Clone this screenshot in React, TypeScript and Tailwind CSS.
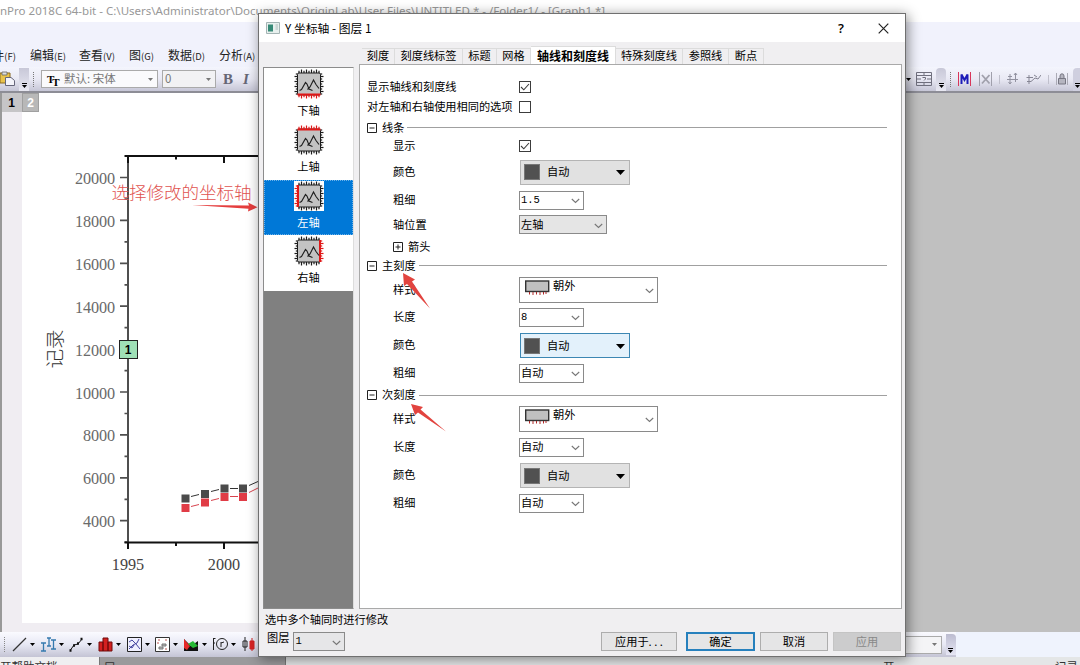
import React from "react";

const MENUS = [
    { label: "编辑", key: "(E)", width: "w-[49px]" },
    { label: "查看", key: "(V)", width: "w-[50px]" },
    { label: "图", key: "(G)", width: "w-[39px]" },
    { label: "数据", key: "(D)", width: "w-[51px]" },
    { label: "分析", key: "(A)", width: "w-[50px]" },
];

const TABS = [
    { label: "刻度", width: "w-[33px]" },
    { label: "刻度线标签", width: "w-[68px]" },
    { label: "标题", width: "w-[34px]" },
    { label: "网格", width: "w-[34px]" },
    { label: "轴线和刻度线", width: "w-[85px]", active: true },
    { label: "特殊刻度线", width: "w-[67px]" },
    { label: "参照线", width: "w-[46px]" },
    { label: "断点", width: "w-[35px]" },
];

type Side = "bottom" | "top" | "left" | "right";

const AXES: { side: Side; label: string }[] = [
    { side: "bottom", label: "下轴" },
    { side: "top", label: "上轴" },
    { side: "left", label: "左轴" },
    { side: "right", label: "右轴" },
];

const Y_TICKS = [20000, 18000, 16000, 14000, 12000, 10000, 8000, 6000, 4000];

const AxisIcon = ({ side }: { side: Side }) => {
    const color = (s: Side) => (s === side ? "#e01818" : "#1c1c1c");
    const ticks = [5, 7.5, 10, 12.5, 15, 17.5, 20, 22.5, 25];
    return (
        <svg width="30" height="30" viewBox="0 0 30 30" className="shrink-0 bg-white">
            <rect x="3.5" y="4" width="23" height="22" rx="1.5" fill="#c3c3c3" stroke="#1c1c1c" />
            {ticks.map((t, i) => {
                const o = i % 2 ? 0 : 1.3;
                return (
                    <g key={t} strokeWidth="1.2">
                        <path d={`M${t} ${0.5 + o}V4`} stroke={color("top")} />
                        <path d={`M${t} 26V${29.5 - o}`} stroke={color("bottom")} />
                        <path d={`M${0.5 + o} ${t}H3.5`} stroke={color("left")} />
                        <path d={`M26.5 ${t}H${29.5 - o}`} stroke={color("right")} />
                    </g>
                );
            })}
            {side === "top" && <path d="M3.5 4.5H26.5" stroke="#e01818" strokeWidth="2" />}
            {side === "bottom" && <path d="M3.5 25.5H26.5" stroke="#e01818" strokeWidth="2" />}
            {side === "left" && <path d="M4 4V26" stroke="#e01818" strokeWidth="2" />}
            {side === "right" && <path d="M26 4V26" stroke="#e01818" strokeWidth="2" />}
            <path
                d="M5.500 21.500L7.500 20.500L11.500 13.500L13 15L15 20L18.500 21.500M13.500 20.500L16 18L19.500 11L22 15.500L25 19.500"
                fill="none"
                stroke="#1c1c1c"
                strokeWidth="1.1"
            />
        </svg>
    );
};

const Chevron = () => (
    <svg width="9" height="6" viewBox="0 0 9 6" className="mt-[2px] shrink-0">
        <path d="M0.8 1L4.5 4.5L8.2 1" fill="none" stroke="#777" strokeWidth="1.1" />
    </svg>
);

const Down = ({ className = "text-black" }: { className?: string }) => (
    <svg width="5" height="3" viewBox="0 0 5 3" className={`shrink-0 ${className}`}>
        <path d="M0 0H5L2.5 3Z" fill="currentColor" />
    </svg>
);

const Check = ({ checked }: { checked?: boolean }) => (
    <div className="flex h-3 w-3 items-center justify-center border border-[#3c3c3c] bg-white">
        {checked && (
            <svg width="10" height="10" viewBox="0 0 10 10">
                <path d="M1 5L3.8 7.8L9 2" fill="none" stroke="#3c3c3c" strokeWidth="1.1" />
            </svg>
        )}
    </div>
);

const Combo = ({ value, className = "w-[65px] bg-white" }: { value: string; className?: string }) => (
    <div className={`flex h-[19px] items-center justify-between border border-[#8a8a8a] pl-[1px] pr-[3px] ${className}`}>
        <span className={/\d/.test(value) ? "font-['Liberation_Mono'] text-[10.5px]" : ""}>{value}</span>
        <Chevron />
    </div>
);

const ColorButton = ({ hot }: { hot?: boolean }) => (
    <div
        className={`ml-px mt-px flex h-[25px] w-[110px] items-center border px-[3px] ${
            hot ? "border-[#3c87b3] bg-[#e3f1fb]" : "border-[#b4b4b4] bg-[#e1e1e1]"
        }`}
    >
        <div className="h-4 w-4 border border-[#777] bg-[#515151]" />
        <span className="ml-[7px] flex-1">自动</span>
        <svg width="9" height="5" viewBox="0 0 9 5" className="mr-px mt-px">
            <path d="M0 0H9L4.5 5Z" />
        </svg>
    </div>
);

const StyleCombo = () => (
    <div className="flex h-[26px] w-[139px] border border-[#8a8a8a] bg-white pl-[5px] pr-[3px]">
        <svg width="25" height="16" viewBox="0 0 25 16" className="mt-[2px]">
            <rect x="0.7" y="1" width="23" height="10.5" fill="#c0c0c0" stroke="#333" strokeWidth="1.4" />
            <path d="M4.5 12V14.5M8 12V15M11.500 12V14.500M15 12V15M18.500 12V14.500M21 12V14" stroke="#b02828" />
        </svg>
        <span className="ml-[3px] flex-1 leading-[15px]">朝外</span>
        <div className="flex items-center">
            <Chevron />
        </div>
    </div>
);

const Row = ({ label, height, children }: { label: string; height: string; children: React.ReactNode }) => (
    <div className={`flex items-center ${height}`}>
        <span className="w-[126px]">{label}</span>
        {children}
    </div>
);

const Expander = ({ plus }: { plus?: boolean }) => (
    <svg width="10" height="10" viewBox="0 0 10 10" className="shrink-0">
        <path d={plus ? "M0.5 0.5H9.5V9.5H0.5ZM2.5 5H7.5M5 2.5V7.5" : "M0.5 0.5H9.5V9.5H0.5ZM2.5 5H7.5"} fill="none" stroke="#222" />
    </svg>
);

const Section = ({ title, height }: { title: string; height: string }) => (
    <div className={`flex items-center ${height}`}>
        <Expander />
        <span className="ml-[5px] mr-[3px]">{title}</span>
        <div className="mr-[14px] h-px flex-1 bg-[#a0a0a0]" />
    </div>
);

const Graph = () => (
    <svg width="258" height="539" viewBox="0 93 258 539" className="block">
        <rect x="22" y="93" width="236" height="530" fill="#fff" />
        <g fill="none" stroke="#4f4f4f" strokeWidth="2">
            <path d="M128 156V543" />
            {Y_TICKS.map((v, i) => (
                <path key={v} d={`M120 ${177.5 + i * 42.9}H128M124.5 ${199 + i * 42.9}H128`} strokeWidth="1.7" />
            ))}
        </g>
        <path d="M124.500 156H258M128 156V163M176 156V159.500M224 156V163" fill="none" stroke="#111" strokeWidth="2" />
        <path d="M124.500 542.500H258M128 542.500V549M176 542.500V546M224 542.500V549" fill="none" stroke="#111" strokeWidth="2" />
        <g className="font-['Liberation_Serif']" fontSize="16.200" fill="#6a6a6a" textAnchor="end">
            {Y_TICKS.map((v, i) => (
                <text key={v} x="115" y={184 + i * 42.9} textLength={v >= 10000 ? 40 : 32}>
                    {v}
                </text>
            ))}
        </g>
        <g className="font-['Liberation_Serif']" fontSize="16.200" fill="#444" textAnchor="middle">
            <text x="128" y="569.500">1995</text>
            <text x="224" y="569.500">2000</text>
        </g>
        <text
            x="0"
            y="0"
            transform="translate(62 349) rotate(-90)"
            textAnchor="middle"
            fontSize="19.500"
            fill="#333"
            className="font-['Noto_Sans_CJK_SC'] font-light"
        >
            记录
        </text>
        <rect x="119.500" y="340.500" width="18" height="18" fill="#9fe0b6" stroke="#222" />
        <text x="128" y="354" textAnchor="middle" fontSize="12" className="font-['Liberation_Sans'] font-bold">1</text>
        <path d="M191 496.500L199 494.500M211 491.500L219 489.500M230 488.500H238M249 485.500L258 481.500" stroke="#333" />
        <path d="M191 506.500L199 504.500M211 500.500L219 498.500M230 496.500H238M249 492.500L258 488" stroke="#d8434e" />
        {[[185.5, 498.5, 508], [205, 494, 502.5], [224.5, 488.5, 497], [243, 488.5, 497]].map(([x, a, b]) => (
            <g key={x}>
                <rect x={x - 4} y={a - 4} width="8" height="8" fill="#4b4b4b" />
                <rect x={x - 4} y={b - 4} width="8" height="8" fill="#e03c46" />
            </g>
        ))}
        <text x="111.500" y="199" fontSize="17.600" textLength="140" fill="#df5350" className="font-['Noto_Sans_CJK_SC'] font-light">
            选择修改的坐标轴
        </text>
        <path d="M192 205L249 205.500L248 202.500L257.500 207.300L248 211.500L248.500 208.800Z" fill="#e53e3e" />
    </svg>
);

const TopToolbar = () => (
    <div className="flex h-[26px] items-center border-b-2 border-[#8d8d96] bg-linear-to-b from-[#f4f5fd] via-[#e9e9f4] to-[#c6c6d6]">
        <svg width="16" height="16" viewBox="0 0 16 16">
            <path d="M0 2H10V12H0Z" fill="#e9c34c" stroke="#8a6a20" />
            <path d="M2 1H7V4H2Z" fill="#ddd" stroke="#666" strokeWidth="0.800" />
            <path d="M5.500 6.500H11L14.500 9.500V14.500H5.500Z" fill="#f4f4fa" stroke="#66667a" />
        </svg>
        <div className="ml-[3px] flex h-[23px] w-[10px] flex-col items-center justify-end gap-px bg-linear-to-b from-[#c8c8d8] to-[#e8e8f2] pb-[3px]">
            <div className="h-px w-[5px] bg-black" />
            <Down />
        </div>
        <div className="ml-[4px] h-[15px] border-l border-dotted border-[#777]" />
        <div className="ml-[7px] flex h-[18px] w-[117px] items-center border border-[#aaa] bg-[#fafafc] pl-[5px] pr-[4px] text-[11.5px] text-[#777]">
            <span className="w-[17px] font-['Liberation_Serif'] text-[11px] font-bold tracking-[-2px] text-black">
                T<sub className="text-[11px]">T</sub>
            </span>
            <span className="flex-1 whitespace-nowrap">默认: 宋体</span>
            <Down className="text-[#777]" />
        </div>
        <div className="ml-[4px] flex h-[18px] w-[54px] items-center justify-between border border-[#aaa] bg-[#f2f2f4] pl-[2px] pr-[4px] text-[11.5px] text-[#777]">
            <span>0</span>
            <Down className="text-[#777]" />
        </div>
        <div className="flex w-[690px] gap-[10px] pl-[7px] font-['Liberation_Serif'] text-[15px] font-bold text-[#666675]">
            <span>B</span>
            <span className="italic">I</span>
        </div>
        <Down />
        <svg width="16" height="16" viewBox="0 0 16 16" className="ml-[5px]" fill="none" stroke="#70707e">
            <path d="M0.500 1.500H15.500V14.500H0.500ZM0.500 4.500H15.500M0.500 8H5M11 8H15.500M0.500 11.500H15.500M8 1.500V5M8 11V14.500" />
            <path d="M6.500 6.500H9.500V8L8 9.500" />
        </svg>
        <div className="ml-[4px] flex h-[23px] w-[10px] flex-col items-center justify-end gap-px rounded-t bg-linear-to-b from-[#c8c8d8] to-[#e8e8f2] pb-[3px]">
            <div className="h-px w-[5px] bg-black" />
            <Down />
        </div>
        <div className="ml-[4px] h-[15px] border-l border-dotted border-[#777]" />
        <svg width="13" height="14" viewBox="0 0 13 14" className="ml-[7px]" fill="none">
            <path d="M0.500 0V14M12.500 0V14" stroke="#d9365a" />
            <path d="M3.500 12V2.500L6.500 8L9.500 2.500V12" stroke="#1c1cb8" strokeWidth="2" />
        </svg>
        <svg width="13" height="14" viewBox="0 0 13 14" className="ml-[8px]" fill="none" stroke="#a0a0ac">
            <path d="M0.500 0V14M12.500 0V14" />
            <path d="M3 3L10.500 11.500M10.500 3L3 11.500" strokeWidth="1.800" />
        </svg>
        <div className="ml-[7px] h-[9px] w-px bg-[#c0c0cc]" />
        <svg width="12" height="12" viewBox="0 0 12 12" className="ml-[7px]" fill="none" stroke="#9292a0">
            <path d="M3 1V11M8.500 0V9M1 3.500H5M0 6.500H11M1.500 9L3 11L4.500 9M7 2L8.500 0L10 2" />
        </svg>
        <svg width="15" height="12" viewBox="0 0 15 12" className="ml-[7px]" fill="none" stroke="#858593">
            <path d="M3 2V11M0.500 4.500H7M1 8.500H5L9 5L12 6L15 2M8 2L11 4" />
        </svg>
        <div className="ml-[7px] h-[9px] w-px bg-[#c0c0cc]" />
        <svg width="12" height="14" viewBox="0 0 12 14" className="ml-[7px]" fill="none" stroke="#777783">
            <path d="M0.500 1V13M11.500 1V13" stroke="#aaaab5" />
            <path d="M2.500 6.500H9.500V12H2.500ZM4 6V4A2 2.200 0 0 1 8 4V6" fill="#b5b5c0" />
        </svg>
        <div className="ml-[5px] flex h-[23px] flex-1 flex-col items-end justify-end gap-px overflow-hidden rounded-tl bg-[#cfcfdf] pb-[3px]">
            <div className="h-px w-[5px] bg-black" />
            <Down />
        </div>
    </div>
);

// plot-type buttons, drawn left to right
const PLOTS = [
    <path key="line" d="M1 14L14 1" stroke="#333" strokeWidth="1.200" />,
    <path key="err" d="M0 6H5M2.500 6V14M0 14H5M6 1H10M8 1V9M6 9H10M10 3H15M12.500 3V12M10 12H15" stroke="#3579ae" strokeWidth="1.300" />,
    <g key="scatter" stroke="#111">
        <path d="M1.500 13L5 8L9 7L13 2" />
        <path d="M0.500 13.500H2.500M4 8.500H6M8 6.500H10M11.500 2H13.500" strokeWidth="2.500" />
    </g>,
    <path key="bars" d="M1 5H5V14H1ZM5 1H10V14H5ZM10 5H14V14H10Z" fill="#d32020" stroke="#700b0b" />,
    <g key="spline" stroke="#4646a0">
        <path d="M0.500 0.500H14.500V14.500H0.500Z" fill="#f0f0ff" stroke="#222" />
        <path d="M2 5L5 3L9 7L13 12M2 12L6 8L10 6L12 2M2 9L5 11L7 8" />
    </g>,
    <g key="bubble" stroke="#333">
        <path d="M0.500 0.500H14.500V14.500H0.500Z" fill="#fff" />
        <path d="M3 3H5M10 3H12M2 6H4M10 12H12" stroke="#b55" />
        <path d="M4 10H8V12H4ZM7 7H11V9H7Z" fill="#bbb" stroke="#777" />
    </g>,
    <g key="area">
        <path d="M0 2L7 9L14 4V14H0Z" fill="#111" />
        <path d="M0 2L6 9L3 13L0 11Z" fill="#e52828" />
        <path d="M4 7L9 4L14 9L9 11Z" fill="#27ba36" />
    </g>,
    <g key="polar" stroke="#222">
        <path d="M0.500 1V13M0.500 1.500H2.500M0.500 6H2" />
        <circle cx="9" cy="7" r="5.500" />
        <path d="M8 10V5M8 6L11 5" />
    </g>,
];

const BottomToolbar = () => (
    <div className="flex h-[25px] items-center bg-linear-to-b from-[#fafaff] via-[#e7e8f4] to-[#c4c4d4]">
        <div className="ml-[4px] mr-[7px] h-[15px] border-l border-dotted border-[#888]" />
        {PLOTS.map((shape) => (
            <div key={shape.key} className="flex w-[28.7px] shrink-0 items-center gap-[3px]">
                <svg width="15" height="15" viewBox="0 0 15 15" fill="none">
                    {shape}
                </svg>
                <Down />
            </div>
        ))}
        <svg width="14" height="15" viewBox="0 0 14 15" fill="none">
            <path d="M3 0V14M1 4H5V10H1Z" stroke="#222" />
            <path d="M10 1V14M8 4H12V12H8Z" fill="#e02828" stroke="#d02020" />
        </svg>
        <div className="flex h-full flex-1 items-center pl-[649px]">
            <div className="flex h-[18px] w-[37px] items-center justify-end border border-[#aaa] bg-[#f4f4f6] pr-[4px]">
                <Down className="text-[#777]" />
            </div>
            <div className="ml-[4px] flex h-[21px] w-[10px] flex-col items-center justify-end gap-px rounded-tr bg-linear-to-b from-[#bcbcd0] to-[#e6e6f4] pb-[2px]">
                <div className="h-px w-[5px] bg-black" />
                <Down />
            </div>
            <div className="h-full flex-1 bg-[#eff3fd]" />
        </div>
    </div>
);

const Dialog = () => (
    <div className="absolute left-[258px] top-[13px] flex h-[644px] w-[648px] flex-col border border-[#707070] bg-[#f0eff1] text-[11.2px] leading-none text-black shadow-[2px_2px_12px_rgba(0,0,0,0.45)]">
        <div className="flex h-[28px] items-center bg-white pl-[7px] text-[11.8px]">
            <svg width="14" height="12" viewBox="0 0 14 12">
                <path d="M0.500 0.500H13.500V11.500H0.500Z" fill="#e8f0ee" stroke="#a4b4b4" />
                <path d="M2 2.500H7V9.500H2Z" fill="#378a77" />
                <path d="M9.500 3H12M9.500 5H12M9.500 7H12" stroke="#aebcbc" />
            </svg>
            <span className="ml-[5px] flex-1">Y 坐标轴 - 图层 1</span>
            <span className="mr-[34px] font-['Open_Sans'] text-[13px] font-semibold">?</span>
            <svg width="11" height="11" viewBox="0 0 11 11" className="mr-[16px]">
                <path d="M0.700 0.700L10.300 10.300M10.300 0.700L0.700 10.300" stroke="#222" strokeWidth="1.200" />
            </svg>
        </div>

        <div className="flex h-[567px] pl-[4px]">
            <div className="mt-[25px] flex h-[542px] w-[91px] flex-col border border-[#8c8c8c] border-r-[#ddd] bg-[#808080]">
                {AXES.map(({ side, label }) => (
                    <div
                        key={side}
                        className={`flex h-[55.8px] flex-col items-center gap-[6px] ${
                            side === "left" ? "border border-dotted border-[#6cb2ea] bg-[#0078d7] text-white" : "bg-white pt-px"
                        }`}
                    >
                        <AxisIcon side={side} />
                        <span>{label}</span>
                    </div>
                ))}
            </div>

            <div className="ml-[5px] flex w-[543px] flex-col pt-[5px]">
                <div className="flex h-[17px] items-end pl-[3px]">
                    {TABS.map((tab) => (
                        <div
                            key={tab.label}
                            className={`flex shrink-0 items-center justify-center whitespace-nowrap border-r border-t border-[#dcdcdc] pb-px ${tab.width} ${
                                tab.active ? "-mb-px h-[19px] bg-white text-[12px] font-bold" : "h-4"
                            }`}
                        >
                            {tab.label}
                        </div>
                    ))}
                </div>
                <div className="flex-1 border border-[#a9a9a9] bg-white pl-[7px] pt-[12px]">
                    <div className="flex h-5 items-center">
                        <span className="w-[152px]">显示轴线和刻度线</span>
                        <Check checked />
                    </div>
                    <div className="flex h-5 items-center">
                        <span className="w-[152px]">对左轴和右轴使用相同的选项</span>
                        <Check />
                    </div>
                    <Section title="线条" height="h-[21px]" />
                    <div className="pl-[26px]">
                        <Row label="显示" height="h-[16px]"><Check checked /></Row>
                        <Row label="颜色" height="h-[35px]"><ColorButton /></Row>
                        <Row label="粗细" height="h-[22px]"><Combo value="1.5" /></Row>
                        <Row label="轴位置" height="h-[27px]"><Combo value="左轴" className="w-[88px] bg-[#e5e5e5]" /></Row>
                        <div className="flex h-[17px] items-center gap-[5px]">
                            <Expander plus />
                            <span>箭头</span>
                        </div>
                    </div>
                    <Section title="主刻度" height="h-[21px]" />
                    <div className="pl-[26px]">
                        <Row label="样式" height="h-[27px]"><StyleCombo /></Row>
                        <Row label="长度" height="h-[28px]"><Combo value="8" /></Row>
                        <Row label="颜色" height="h-[28px]"><ColorButton hot /></Row>
                        <Row label="粗细" height="h-[28px]"><Combo value="自动" /></Row>
                    </div>
                    <Section title="次刻度" height="h-[16px]" />
                    <div className="pl-[26px]">
                        <Row label="样式" height="h-[32px]"><StyleCombo /></Row>
                        <Row label="长度" height="h-[24px]"><Combo value="自动" /></Row>
                        <Row label="颜色" height="h-[32px]"><ColorButton /></Row>
                        <Row label="粗细" height="h-[24px]"><Combo value="自动" /></Row>
                    </div>
                </div>
            </div>
        </div>

        <div className="flex flex-1 pl-[6px] pr-[4px]">
            <div className="flex flex-1 flex-col pt-[5px]">
                <span>选中多个轴同时进行修改</span>
                <div className="mt-[7px] flex gap-[4px] pl-[2px]">
                    <span>图层</span>
                    <Combo value="1" className="w-[52px] bg-[#e6e6e8]" />
                </div>
            </div>
            <div className="flex gap-[5px] pt-[23px]">
                <div className="mr-[4px] flex h-[19px] w-[76px] items-center justify-center border border-[#adadad] bg-[#e5e5e6]">应用于. . .</div>
                <div className="flex h-[19px] w-[69px] items-center justify-center border-2 border-[#2680bd] bg-[#e5e5e6]">确定</div>
                <div className="flex h-[19px] w-[68px] items-center justify-center border border-[#adadad] bg-[#e5e5e6]">取消</div>
                <div className="flex h-[19px] w-[68px] items-center justify-center border border-[#c4c4c4] bg-[#cccccd] text-[#888]">应用</div>
            </div>
        </div>

        {/* red pointers over the section headings */}
        <svg width="31" height="37" viewBox="0 0 31 37" className="absolute left-[143px] top-[258px]">
            <path d="M1 1L2 14L5 12L28 36.500L10 9.500L13 7.500Z" fill="#e2443f" />
        </svg>
        <svg width="38" height="30" viewBox="0 0 38 30" className="absolute left-[151px] top-[389px]">
            <path d="M1 1L5 12L8 9.500L36 28.500L10.500 6.500L13 4Z" fill="#e2443f" />
        </svg>
    </div>
);

const App = () => {
    return (
        <div className="relative flex h-[665px] w-[1080px] flex-col overflow-hidden bg-[#c0c0c0] font-['Noto_Sans_CJK_SC',sans-serif]">
            <div className="flex h-[22px] items-center whitespace-nowrap bg-white font-['Noto_Sans'] text-[11.530px] text-[#989898]">
                nPro 2018C 64-bit - C:\Users\Administrator\Documents\OriginLab\User Files\UNTITLED * - /Folder1/ - [Graph1 *]
            </div>
            <div className="flex h-[45px] items-end bg-[#f1f2fc] pb-[2px] text-xs leading-[18px] text-[#222]">
                <div className="flex w-[30px] justify-end pr-[14px]">
                    <span>件</span>
                    <span className="text-[9.5px]">(F)</span>
                </div>
                {MENUS.map((m) => (
                    <div key={m.label} className={m.width}>
                        {m.label}
                        <span className="text-[9.5px]">{m.key}</span>
                    </div>
                ))}
            </div>
            <TopToolbar />
            <div className="flex h-[539px]">
                <div className="relative w-[258px] bg-[#f0edf2]">
                    <Graph />
                    <div className="absolute left-0 top-0 flex border-l border-[#888] text-[12px] font-bold leading-[20px]">
                        <div className="h-[19px] w-[21px] bg-[#c6c5c7] text-center font-['Liberation_Sans']">1</div>
                        <div className="h-[19px] w-[17px] border border-[#a0a0a0] bg-[#b8b8b8] text-center font-['Liberation_Sans'] leading-[18px] text-white">2</div>
                    </div>
                    <div className="absolute left-0 top-0 h-full w-[2px] bg-[#999]" />
                </div>
            </div>
            <BottomToolbar />
            <div className="flex h-2 overflow-hidden bg-[#e4e6e7] text-[11.5px] leading-[19px] text-[#333]">
                <div className="w-[100px] shrink-0 whitespace-nowrap border-r border-[#777] bg-[#efeff1]">开帮助文档</div>
                <div className="w-[186px] border-r border-[#777] bg-[#9a9a9c] pl-[4px]">口 ɔ</div>
                <div className="flex-1 pl-[597px]">开</div>
                <div className="pr-[2px]">记录</div>
            </div>
            <Dialog />
        </div>
    );
};

export default App;
